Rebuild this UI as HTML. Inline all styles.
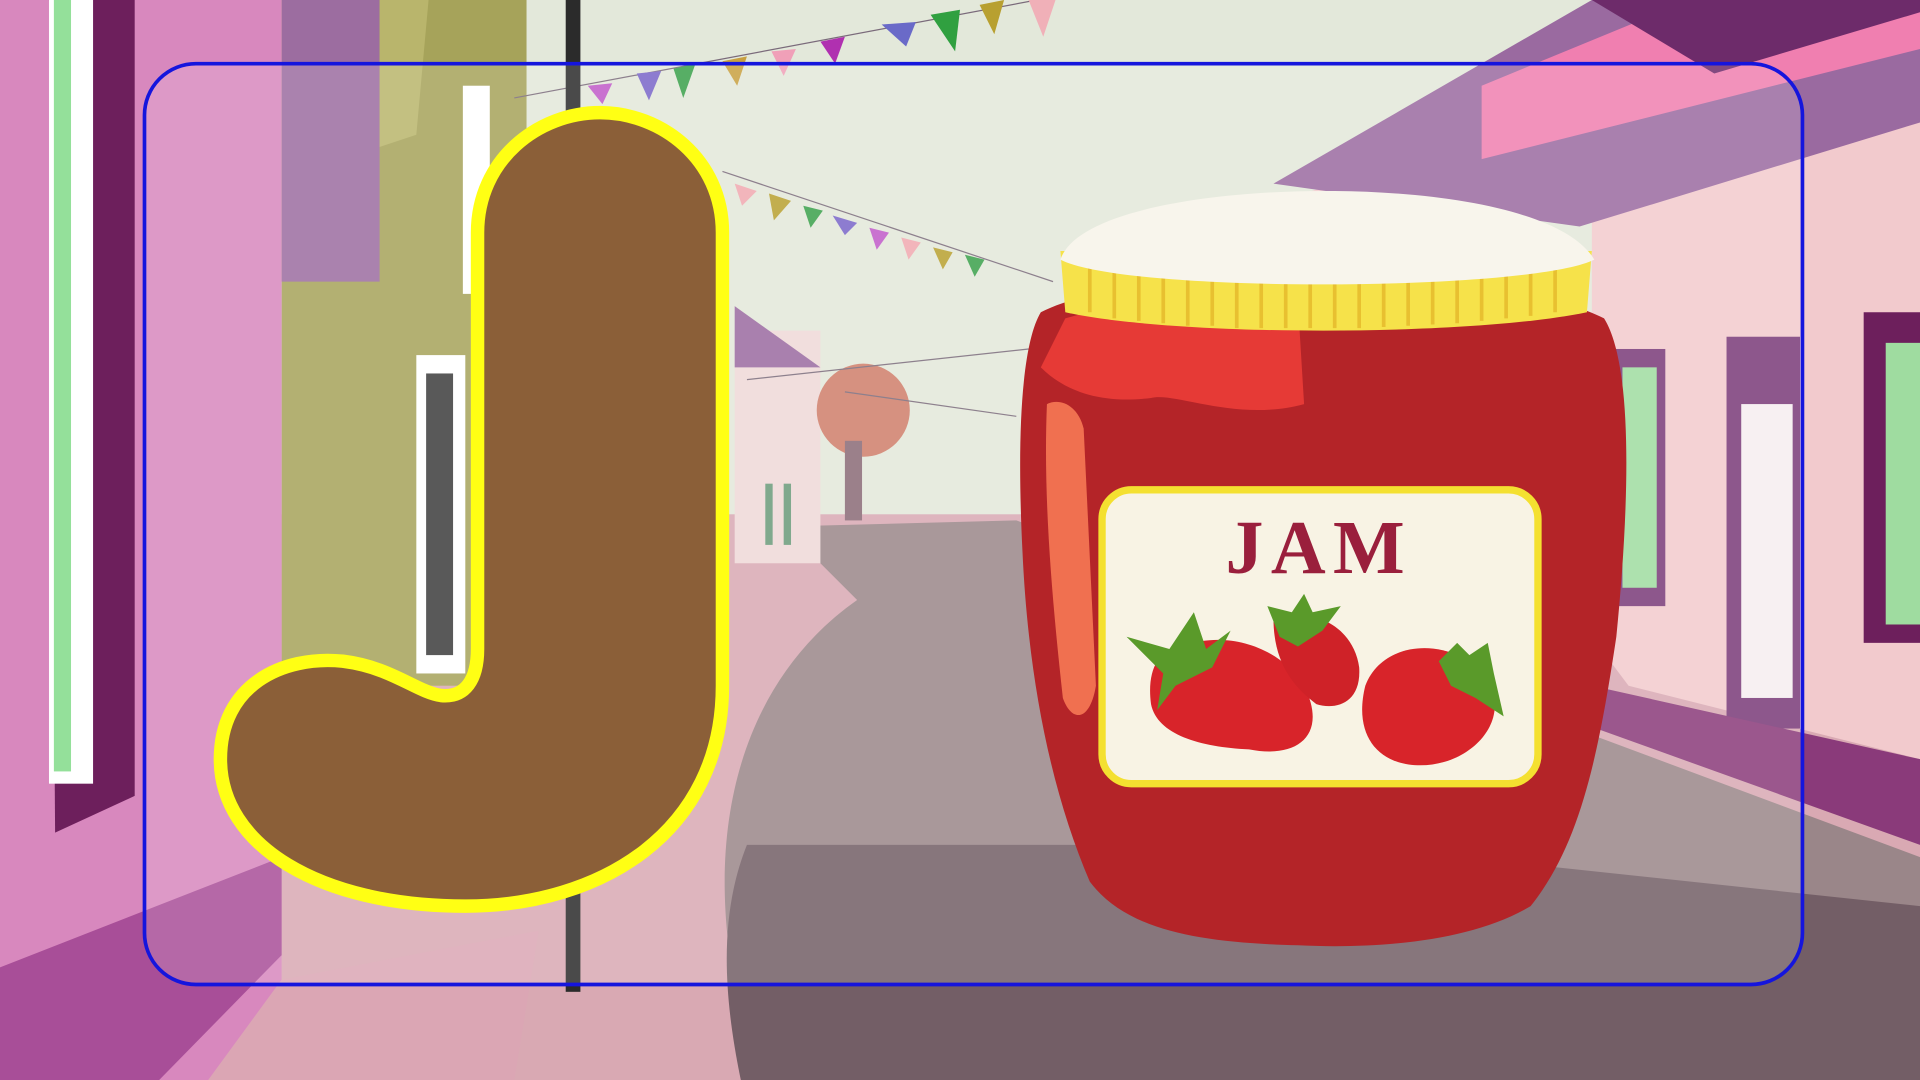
<!DOCTYPE html>
<html><head><meta charset="utf-8"><style>
html,body{margin:0;padding:0;width:1920px;height:1080px;overflow:hidden;background:#e4e8dc}
svg{display:block}
</style></head><body>
<svg width="1920" height="1080" viewBox="0 0 1568 882" xmlns="http://www.w3.org/2000/svg">
<rect width="1568" height="882" fill="#e3e8da"/>
<rect x="0" y="420" width="1568" height="462" fill="#d9a9b3"/>
<path d="M640 430 L830 425 L1568 700 L1568 882 L620 882 C560 700 600 560 700 490 Z" fill="#9a8689"/>
<path d="M605 882 C588 800 590 740 610 690 L1100 690 L1568 740 L1568 882 Z" fill="#735e66"/>
<path d="M1060 160 L1290 80 L1568 0 L1568 620 L1330 560 L1300 520 L1300 170 Z" fill="#f2cacd"/>
<path d="M1040 150 L1300 0 L1568 0 L1568 100 L1290 185 Z" fill="#9a6aa0"/>
<path d="M1210 70 L1380 0 L1568 0 L1568 40 L1210 130 Z" fill="#f07fb0"/>
<path d="M1300 0 L1568 0 L1568 10 L1400 60 Z" fill="#6d2b6a"/>
<rect x="1318" y="285" width="42" height="210" fill="#7a3a78"/>
<rect x="1325" y="300" width="28" height="180" fill="#9fdca0"/>
<rect x="1410" y="275" width="60" height="320" fill="#7a3a78"/>
<rect x="1422" y="330" width="42" height="240" fill="#f6eef0"/>
<rect x="1522" y="255" width="46" height="270" fill="#6d1f5c"/>
<rect x="1540" y="280" width="28" height="230" fill="#9fdca0"/>
<path d="M1300 560 L1568 620 L1568 690 L1290 590 Z" fill="#8a3a7a"/>
<rect x="230" y="0" width="200" height="560" fill="#a6a35a"/>
<rect x="230" y="0" width="80" height="230" fill="#9c6da0"/>
<path d="M310 0 L350 0 L340 110 L310 120 Z" fill="#b9b56c"/>
<rect x="340" y="290" width="40" height="260" fill="#fff"/>
<rect x="348" y="305" width="22" height="230" fill="#3c3c3c"/>
<rect x="378" y="70" width="22" height="170" fill="#fff"/>
<rect x="600" y="270" width="70" height="190" fill="#efd9d8"/>
<path d="M600 250 L670 300 L600 300 Z" fill="#9a6aa0"/>
<rect x="625" y="395" width="6" height="50" fill="#6a9a7a"/>
<rect x="640" y="395" width="6" height="50" fill="#6a9a7a"/>
<circle cx="705" cy="335" r="38" fill="#cf7e6a"/>
<rect x="690" y="360" width="14" height="65" fill="#8a6a76"/>
<g fill="none" stroke="#7a6a7a" stroke-width="1">
<path d="M420 80 L900 -10"/><path d="M590 140 L860 230"/><path d="M610 310 L840 285"/><path d="M690 320 L830 340"/>
</g>
<g>
<polygon points="480,70 500,68 492,85" fill="#c05ac8"/><polygon points="520,60 540,58 530,82" fill="#7a66c8"/>
<polygon points="550,56 568,52 558,80" fill="#3aa04a"/><polygon points="590,50 610,46 602,70" fill="#c8a040"/>
<polygon points="630,42 650,40 640,62" fill="#f0a0b8"/><polygon points="670,34 690,30 682,52" fill="#b030b0"/>
<polygon points="720,20 748,18 740,38" fill="#6a6ac8"/><polygon points="760,12 784,8 780,42" fill="#30a040"/>
<polygon points="800,4 820,0 812,28" fill="#b8a030"/><polygon points="840,0 862,0 852,30" fill="#f0b0b8"/>
<polygon points="600,150 618,156 606,168" fill="#f0a8b0"/><polygon points="628,158 646,164 632,180" fill="#b8a030"/>
<polygon points="656,168 672,172 662,186" fill="#3aa04a"/><polygon points="680,176 700,182 690,192" fill="#7a66c8"/>
<polygon points="710,186 726,190 716,204" fill="#c05ac8"/><polygon points="736,194 752,198 742,212" fill="#f0a8b0"/>
<polygon points="762,202 778,206 770,220" fill="#b8a030"/><polygon points="788,208 804,212 796,226" fill="#3aa04a"/>
</g>
<path d="M0 0 L230 0 L230 882 L0 882 Z" fill="#d888be"/>
<path d="M40 0 L110 0 L110 650 L45 680 Z" fill="#6d1f5c"/>
<rect x="40" y="0" width="36" height="640" fill="#fff"/>
<rect x="44" y="0" width="14" height="630" fill="#94e09a"/>
<path d="M0 882 L0 790 L230 700 L230 780 L130 882 Z" fill="#a84e98"/>
<path d="M170 882 L230 800 L440 760 L420 882 Z" fill="#dba6b4"/>
<rect x="462" y="0" width="12" height="810" fill="#2b2b2b"/>
<rect x="118" y="52" width="1354" height="752" rx="42" fill="#ffffff" fill-opacity="0.15" stroke="#1515dd" stroke-width="3"/>
<path d="M490 92 C540 92 590 130 590 190 L590 560 C590 680 490 740 380 740 C260 740 180 690 180 620 C180 560 230 535 280 540 C320 545 340 565 360 568 C380 570 390 555 390 530 L390 190 C390 130 440 92 490 92 Z" fill="#8b5f38" stroke="#ffff14" stroke-width="11"/>
<path d="M850 255 C900 230 1000 225 1080 228 C1170 230 1260 235 1310 260 C1335 300 1330 420 1320 520 C1305 620 1290 690 1250 740 C1200 770 1120 775 1060 772 C980 770 920 760 890 720 C860 650 840 560 835 450 C830 350 835 280 850 255 Z" fill="#b42428"/>
<path d="M870 260 C920 245 1000 245 1060 248 L1065 330 C1010 345 960 320 940 325 C900 330 870 320 850 300 Z" fill="#e63a36"/>
<path d="M855 330 C865 325 880 330 885 350 L895 560 C890 590 875 590 868 570 C858 480 852 400 855 330 Z" fill="#f07050"/>
<path d="M866 205 L1300 205 L1296 255 C1200 275 960 275 870 255 Z" fill="#f6e24a"/>
<g stroke="#e8c030" stroke-width="3">
<path d="M890 215 V255 M910 215 V260 M930 215 V262 M950 215 V264 M970 215 V266 M990 215 V266 M1010 215 V268 M1030 215 V268 M1050 215 V268 M1070 215 V268 M1090 215 V268 M1110 215 V268 M1130 215 V267 M1150 215 V266 M1170 215 V265 M1190 215 V264 M1210 215 V262 M1230 215 V260 M1250 215 V258 M1270 215 V255"/>
</g>
<path d="M866 212 C880 170 1000 155 1090 156 C1190 157 1280 175 1302 212 C1250 238 920 240 866 212 Z" fill="#f8f5ec"/>
<rect x="900" y="400" width="356" height="240" rx="24" fill="#f8f3e4" stroke="#f4e030" stroke-width="6"/>
<text x="1077" y="468" text-anchor="middle" font-family="Liberation Serif, DejaVu Serif, serif" font-weight="bold" font-size="62" fill="#9a1f3c" letter-spacing="6">JAM</text>
<path d="M945 540 C980 510 1040 520 1065 560 C1085 600 1060 620 1020 612 C980 610 945 600 940 575 C938 560 940 548 945 540 Z" fill="#d8242a"/>
<path d="M1040 505 C1070 495 1105 510 1110 545 C1112 575 1090 580 1075 575 C1055 560 1040 540 1040 505 Z" fill="#cf2228"/>
<path d="M1115 560 C1130 520 1190 520 1215 555 C1235 590 1200 625 1160 625 C1125 625 1105 600 1115 560 Z" fill="#d8242a"/>
<g fill="#5a9a2a">
<path d="M920 520 L955 530 L975 500 L985 530 L1005 515 L990 545 L960 560 L945 580 L950 550 Z"/>
<path d="M1035 495 L1055 500 L1065 485 L1072 500 L1095 495 L1080 515 L1060 528 L1045 520 Z"/>
<path d="M1175 540 L1190 525 L1200 535 L1215 525 L1220 550 L1228 585 L1205 570 L1185 560 Z"/>
</g>
</svg>
</body></html>
